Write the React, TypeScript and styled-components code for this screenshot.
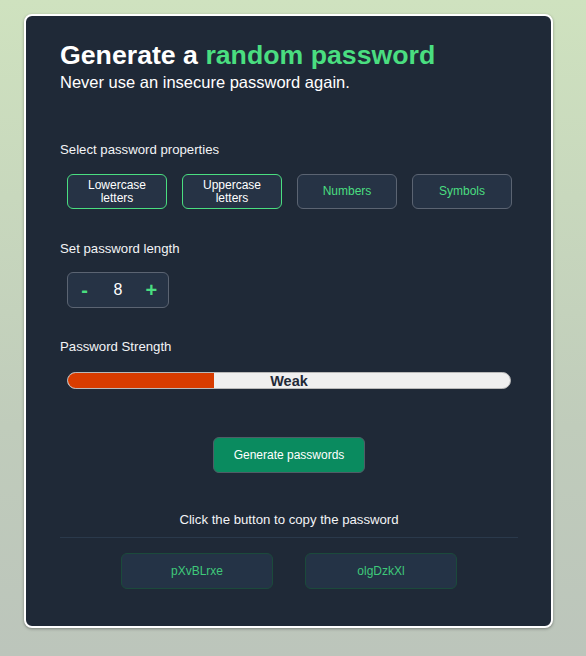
import React, { useState } from "react";
import styled, { createGlobalStyle } from "styled-components";

const GlobalStyle = createGlobalStyle`
  html, body {
    margin: 0;
    padding: 0;
  }
  body {
    min-height: 656px;
    font-family: "Liberation Sans", Arial, sans-serif;
    background: linear-gradient(180deg, #cfe2bf 0%, #c8d8bd 30%, #c0ccbb 65%, #bcc5bb 100%);
  }
`;

const Page = styled.div`
  padding: 14px 0 0 24px;
`;

const Card = styled.main`
  box-sizing: border-box;
  width: 529px;
  height: 614px;
  background: #1f2937;
  border: 2px solid #ffffff;
  border-radius: 8px;
  box-shadow: 0 1px 3px rgba(0, 0, 0, 0.35);
  padding: 24px 33px 0 34px;
  display: flex;
  flex-direction: column;
  color: #ffffff;
`;

const Title = styled.h1`
  margin: 0;
  font-size: 26.7px;
  line-height: 30px;
  font-weight: 700;
  color: #ffffff;
`;

const Accent = styled.span`
  color: #4ade80;
`;

const Subtitle = styled.p`
  margin: 3px 0 0;
  font-size: 16.5px;
  line-height: 19px;
  color: #ffffff;
`;

const Label = styled.h2<{ $top: number }>`
  margin: ${(p) => p.$top}px 0 0;
  font-size: 13.2px;
  line-height: 16px;
  font-weight: 400;
  color: #f3f4f6;
`;

const OptionRow = styled.div`
  display: flex;
  gap: 15px;
  margin: 16px 0 0 7px;
`;

const Toggle = styled.button<{ $on: boolean }>`
  box-sizing: border-box;
  width: 100px;
  height: 35px;
  border-radius: 6px;
  background: #263345;
  border: 1.5px solid ${(p) => (p.$on ? "#4ade80" : "#5b6472")};
  color: ${(p) => (p.$on ? "#ffffff" : "#4ade80")};
  font-family: inherit;
  font-size: 12px;
  line-height: 13px;
  padding: 0 12px;
  cursor: pointer;
`;

const Counter = styled.div`
  box-sizing: border-box;
  display: grid;
  grid-template-columns: repeat(3, 1fr);
  align-items: center;
  width: 102px;
  height: 36px;
  margin: 15px 0 0 7px;
  border: 1.5px solid #5b6472;
  border-radius: 6px;
  background: #263345;
`;

const StepButton = styled.button`
  background: transparent;
  border: none;
  color: #4ade80;
  font-family: inherit;
  font-size: 20px;
  font-weight: 700;
  line-height: 20px;
  padding: 0;
  cursor: pointer;
`;

const CountValue = styled.span`
  text-align: center;
  font-size: 16px;
  color: #ffffff;
`;

const Meter = styled.div`
  position: relative;
  box-sizing: border-box;
  margin: 17px 7px 0 7px;
  height: 17px;
  border: 1px solid #b9b9b9;
  border-radius: 9px;
  background: #efefef;
  overflow: hidden;
`;

const MeterFill = styled.div`
  height: 100%;
  background: #d83c00;
`;

const MeterText = styled.span`
  position: absolute;
  inset: 0;
  display: flex;
  align-items: center;
  justify-content: center;
  font-size: 14.5px;
  font-weight: 700;
  color: #1f2937;
`;

const Center = styled.div<{ $top: number }>`
  display: flex;
  justify-content: center;
  margin-top: ${(p) => p.$top}px;
`;

const GenerateButton = styled.button`
  box-sizing: border-box;
  width: 152px;
  height: 36px;
  border-radius: 6px;
  background: #0a8b5f;
  border: 1px solid #4f5d66;
  color: #ffffff;
  font-family: inherit;
  font-size: 12px;
  cursor: pointer;
`;

const CopyHint = styled.p`
  margin: 39px 0 0;
  text-align: center;
  font-size: 13.2px;
  line-height: 16px;
  color: #f3f4f6;
`;

const Divider = styled.hr`
  margin: 9px 0 0;
  border: none;
  border-top: 1px solid #2a394b;
`;

const PasswordRow = styled.div`
  display: flex;
  justify-content: center;
  gap: 32px;
  margin-top: 15px;
`;

const PasswordButton = styled.button`
  box-sizing: border-box;
  width: 152px;
  height: 36px;
  border-radius: 6px;
  background: #243346;
  border: 1px solid #1b4a3b;
  color: #3fc97a;
  font-family: inherit;
  font-size: 12px;
  cursor: pointer;
`;

const options = [
  { key: "lower", label: "Lowercase letters", on: true },
  { key: "upper", label: "Uppercase letters", on: true },
  { key: "num", label: "Numbers", on: false },
  { key: "sym", label: "Symbols", on: false },
];

export default function App() {
  const [length, setLength] = useState(8);
  const [opts, setOpts] = useState(options);
  const strength = 33;

  return (
    <>
      <GlobalStyle />
      <Page>
        <Card>
          <Title>
            Generate a <Accent>random password</Accent>
          </Title>
          <Subtitle>Never use an insecure password again.</Subtitle>

          <Label $top={50}>Select password properties</Label>
          <OptionRow>
            {opts.map((o) => (
              <Toggle
                key={o.key}
                $on={o.on}
                onClick={() =>
                  setOpts(opts.map((x) => (x.key === o.key ? { ...x, on: !x.on } : x)))
                }
              >
                {o.label}
              </Toggle>
            ))}
          </OptionRow>

          <Label $top={32}>Set password length</Label>
          <Counter>
            <StepButton onClick={() => setLength(Math.max(1, length - 1))}>-</StepButton>
            <CountValue>{length}</CountValue>
            <StepButton onClick={() => setLength(length + 1)}>+</StepButton>
          </Counter>

          <Label $top={31}>Password Strength</Label>
          <Meter>
            <MeterFill style={{ width: `${strength}%` }} />
            <MeterText>Weak</MeterText>
          </Meter>

          <Center $top={48}>
            <GenerateButton>Generate passwords</GenerateButton>
          </Center>

          <CopyHint>Click the button to copy the password</CopyHint>
          <Divider />
          <PasswordRow>
            <PasswordButton>pXvBLrxe</PasswordButton>
            <PasswordButton>olgDzkXl</PasswordButton>
          </PasswordRow>
        </Card>
      </Page>
    </>
  );
}
